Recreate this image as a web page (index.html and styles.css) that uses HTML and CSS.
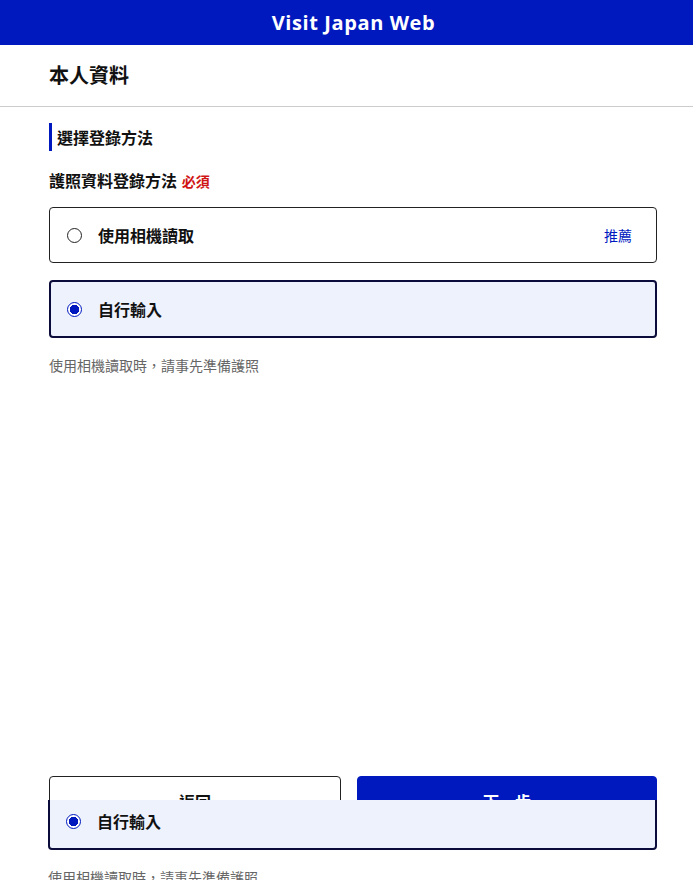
FILE: index.html
```html
<!DOCTYPE html>
<html lang="zh-Hant">
<head>
<meta charset="utf-8">
<title>Visit Japan Web</title>
<link rel="stylesheet" href="styles.css">
</head>
<body>
<header class="topbar"><h1 class="brand">Visit Japan Web</h1></header>
<div class="page-title-row"><h2 class="page-title">本人資料</h2></div>
<main class="content">
  <h3 class="section-title">選擇登錄方法</h3>
  <div class="field-label">護照資料登錄方法 <span class="required">必須</span></div>
  <div class="options">
    <label class="option">
      <span class="radio"></span>
      <span class="option-text">使用相機讀取</span>
      <span class="badge">推薦</span>
    </label>
    <label class="option option-selected">
      <span class="radio radio-checked"></span>
      <span class="option-text">自行輸入</span>
    </label>
  </div>
  <p class="hint">使用相機讀取時，請事先準備護照</p>
</main>
<footer class="actions">
  <button class="btn btn-back">返回</button>
  <button class="btn btn-next">下一步</button>
</footer>
<div class="ghost">
  <div class="ghost-inner">
    <label class="option option-selected">
      <span class="radio radio-checked"></span>
      <span class="option-text">自行輸入</span>
    </label>
    <p class="hint">使用相機讀取時，請事先準備護照</p>
  </div>
</div>
</body>
</html>
```

FILE: styles.css
```css
* { box-sizing: border-box; }
html, body { margin: 0; padding: 0; }
body {
  width: 693px;
  height: 880px;
  position: relative;
  overflow: hidden;
  background: #fff;
  color: #111;
  font-family: "Noto Sans CJK TC", "Noto Sans", sans-serif;
}
.topbar {
  height: 45px;
  background: #0019bf;
  display: flex;
  align-items: center;
  justify-content: center;
}
.brand {
  margin: 0;
  color: #fff;
  font-family: "Open Sans", "Noto Sans", sans-serif;
  font-weight: 700;
  font-size: 20px;
  letter-spacing: 0.6px;
  line-height: 1;
  padding-left: 14px;
}
.page-title-row {
  height: 62px;
  border-bottom: 1px solid #cccccc;
  display: flex;
  align-items: center;
  padding-left: 49px;
}
.page-title {
  margin: 0;
  font-size: 20px;
  font-weight: 700;
  line-height: 1;
  margin-top: -1px;
}
.content {
  padding: 16px 36px 0 49px;
}
.section-title {
  margin: 0;
  border-left: 3px solid #0019bf;
  padding-left: 5px;
  font-size: 16px;
  font-weight: 700;
  line-height: 28px;
}
.field-label {
  margin-top: 17px;
  font-size: 16px;
  font-weight: 700;
  line-height: 24px;
}
.required {
  color: #d01515;
  font-size: 14px;
  margin-left: 1px;
}
.options {
  margin-top: 14px;
  display: flex;
  flex-direction: column;
  gap: 17px;
}
.option {
  display: flex;
  align-items: center;
  height: 56px;
  border: 1px solid #222;
  border-radius: 4px;
  padding: 0 24px 0 17px;
  background: #fff;
}
.option-selected {
  height: 58px;
  border: 2px solid #0c0c3c;
  background: #eef2fd;
  padding-left: 16px;
}
.radio {
  width: 15px;
  height: 15px;
  border: 1.5px solid #222;
  border-radius: 50%;
  background: #fff;
  flex: none;
}
.radio-checked {
  border: 1.5px solid #0019bf;
  background: radial-gradient(circle, #0019bf 0 4.5px, #fff 5px);
}
.option-text {
  margin-left: 16px;
  font-size: 16px;
  font-weight: 700;
  flex: 1;
}
.badge {
  color: #0019bf;
  font-size: 14px;
}
.hint {
  margin: 18px 0 0;
  color: #666;
  font-size: 14px;
  line-height: 18px;
}
.actions {
  position: absolute;
  left: 49px;
  right: 36px;
  top: 776px;
  display: flex;
  gap: 16px;
}
.btn {
  height: 50px;
  border-radius: 4px;
  font-family: "Noto Sans CJK TC", sans-serif;
  font-size: 16px;
  font-weight: 700;
}
.btn-back {
  width: 292px;
  background: #fff;
  border: 1px solid #222;
  color: #111;
}
.btn-next {
  flex: 1;
  background: #0019bf;
  border: 1px solid #0019bf;
  color: #fff;
}
.ghost {
  position: absolute;
  left: 0;
  right: 0;
  top: 800px;
  height: 80px;
  overflow: hidden;
  background: #fff;
}
.ghost-inner {
  margin-top: -8px;
  padding: 0 36px 0 48px;
}
```
